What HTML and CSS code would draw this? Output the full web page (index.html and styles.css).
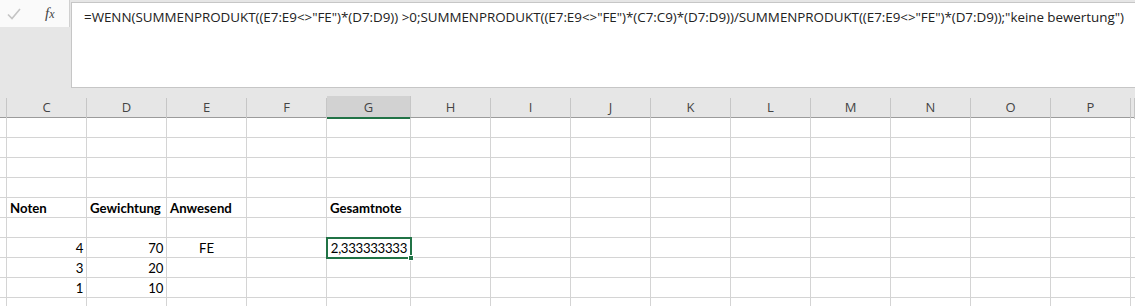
FILE: index.html
```html
<!DOCTYPE html>
<html lang="de">
<head>
    <meta charset="UTF-8">
    <title>Excel</title>
    <link rel="stylesheet" href="styles.css">
</head>
<body>
    <div class="formula-bar">
        <div class="tools">
            <div class="tool-strip">
                <svg class="check" width="14" height="12" viewBox="0 0 14 12">
                    <path d="M1 6.5 L5 10.5 L13 1" fill="none" stroke="#c4c4c4" stroke-width="1.6"/>
                </svg>
                <span class="fx">f<small>x</small></span>
            </div>
        </div>
        <div class="formula-input">=WENN(SUMMENPRODUKT((E7:E9&lt;&gt;"FE")*(D7:D9)) &gt;0;SUMMENPRODUKT((E7:E9&lt;&gt;"FE")*(C7:C9)*(D7:D9))/SUMMENPRODUKT((E7:E9&lt;&gt;"FE")*(D7:D9));"keine bewertung")</div>
    </div>

    <div class="sheet">
        <div class="hd"></div>
        <div class="hd">C</div>
        <div class="hd">D</div>
        <div class="hd">E</div>
        <div class="hd">F</div>
        <div class="hd selected">G</div>
        <div class="hd">H</div>
        <div class="hd">I</div>
        <div class="hd">J</div>
        <div class="hd">K</div>
        <div class="hd">L</div>
        <div class="hd">M</div>
        <div class="hd">N</div>
        <div class="hd">O</div>
        <div class="hd">P</div>
        <div class="hd"></div>
    </div>

    <div class="rows">
        <div class="row"><div class="c"></div><div class="c"></div><div class="c"></div><div class="c"></div><div class="c"></div><div class="c g"></div><div class="c"></div><div class="c"></div><div class="c"></div><div class="c"></div><div class="c"></div><div class="c"></div><div class="c"></div><div class="c"></div><div class="c"></div><div class="c"></div></div>
        <div class="row"><div class="c"></div><div class="c"></div><div class="c"></div><div class="c"></div><div class="c"></div><div class="c g"></div><div class="c"></div><div class="c"></div><div class="c"></div><div class="c"></div><div class="c"></div><div class="c"></div><div class="c"></div><div class="c"></div><div class="c"></div><div class="c"></div></div>
        <div class="row"><div class="c"></div><div class="c"></div><div class="c"></div><div class="c"></div><div class="c"></div><div class="c g"></div><div class="c"></div><div class="c"></div><div class="c"></div><div class="c"></div><div class="c"></div><div class="c"></div><div class="c"></div><div class="c"></div><div class="c"></div><div class="c"></div></div>
        <div class="row"><div class="c"></div><div class="c"></div><div class="c"></div><div class="c"></div><div class="c"></div><div class="c g"></div><div class="c"></div><div class="c"></div><div class="c"></div><div class="c"></div><div class="c"></div><div class="c"></div><div class="c"></div><div class="c"></div><div class="c"></div><div class="c"></div></div>
        <div class="row"><div class="c"></div><div class="c b">Noten</div><div class="c b">Gewichtung</div><div class="c b">Anwesend</div><div class="c"></div><div class="c g b">Gesamtnote</div><div class="c"></div><div class="c"></div><div class="c"></div><div class="c"></div><div class="c"></div><div class="c"></div><div class="c"></div><div class="c"></div><div class="c"></div><div class="c"></div></div>
        <div class="row"><div class="c"></div><div class="c"></div><div class="c"></div><div class="c"></div><div class="c"></div><div class="c g"></div><div class="c"></div><div class="c"></div><div class="c"></div><div class="c"></div><div class="c"></div><div class="c"></div><div class="c"></div><div class="c"></div><div class="c"></div><div class="c"></div></div>
        <div class="row"><div class="c"></div><div class="c num">4</div><div class="c num">70</div><div class="c mid">FE</div><div class="c"></div><div class="c g num active">2,333333333<span class="handle"></span></div><div class="c"></div><div class="c"></div><div class="c"></div><div class="c"></div><div class="c"></div><div class="c"></div><div class="c"></div><div class="c"></div><div class="c"></div><div class="c"></div></div>
        <div class="row"><div class="c"></div><div class="c num">3</div><div class="c num">20</div><div class="c"></div><div class="c"></div><div class="c g"></div><div class="c"></div><div class="c"></div><div class="c"></div><div class="c"></div><div class="c"></div><div class="c"></div><div class="c"></div><div class="c"></div><div class="c"></div><div class="c"></div></div>
        <div class="row"><div class="c"></div><div class="c num">1</div><div class="c num">10</div><div class="c"></div><div class="c"></div><div class="c g"></div><div class="c"></div><div class="c"></div><div class="c"></div><div class="c"></div><div class="c"></div><div class="c"></div><div class="c"></div><div class="c"></div><div class="c"></div><div class="c"></div></div>
        <div class="row"><div class="c"></div><div class="c"></div><div class="c"></div><div class="c"></div><div class="c"></div><div class="c g"></div><div class="c"></div><div class="c"></div><div class="c"></div><div class="c"></div><div class="c"></div><div class="c"></div><div class="c"></div><div class="c"></div><div class="c"></div><div class="c"></div></div>
    </div>
</body>
</html>
```

FILE: styles.css
```css
* {
    margin: 0;
    padding: 0;
    box-sizing: border-box;
}

body {
    background: #e6e6e6;
    font-family: "Open Sans", sans-serif;
    overflow: hidden;
    height: 306px;
}

.formula-bar {
    display: flex;
    height: 96px;
}

.tools {
    width: 70px;
}

.tool-strip {
    height: 27px;
    background: #fafafa;
    border-right: 1px solid #d0d0d0;
    display: flex;
    align-items: center;
    padding-left: 7px;
    gap: 24px;
}

.check {
    margin-top: 1px;
}

.fx {
    font-family: "Liberation Serif", serif;
    font-style: italic;
    font-size: 15px;
    color: #444;
}

.fx small {
    font-size: 12px;
}

.formula-input {
    flex: 1;
    margin-top: 2px;
    height: 86px;
    margin-left: 1px;
    background: #fff;
    border: 1px solid #c6c6c6;
    border-right: none;
    padding: 5px 0 0 12px;
    font-size: 13.4px;
    letter-spacing: -0.03px;
    color: #222;
    white-space: nowrap;
}

.sheet,
.row {
    display: grid;
    grid-template-columns: 7px 80px 80px 80px 80px 84px repeat(9, 80px) 1fr;
}

.sheet {
    height: 22px;
    border-bottom: 1px solid #9b9b9b;
}

.hd {
    border-right: 1px solid #c6c6c6;
    margin-top: 2px;
    text-align: center;
    font-size: 13px;
    color: #444;
    line-height: 19px;
}

.hd.selected {
    background: #d2d2d2;
    border-bottom: 2px solid #217346;
    margin-top: 0;
    padding-top: 2px;
}

.rows {
    background: #fff;
}

.row {
    height: 20px;
}

.c {
    position: relative;
    border-right: 1px solid #d4d4d4;
    border-bottom: 1px solid #d4d4d4;
    padding: 1px 3px 0;
    font-family: "Lato", sans-serif;
    font-size: 13.2px;
    color: #000;
    line-height: 18px;
    white-space: nowrap;
}

.b {
    font-weight: bold;
}

.num {
    text-align: right;
    letter-spacing: -0.3px;
}

.mid {
    text-align: center;
}

.active {
    outline: 2px solid #217346;
    outline-offset: -1px;
    z-index: 1;
}

.handle {
    position: absolute;
    right: -4px;
    bottom: -4px;
    width: 6px;
    height: 6px;
    background: #217346;
    border: 1px solid #fff;
}
```
